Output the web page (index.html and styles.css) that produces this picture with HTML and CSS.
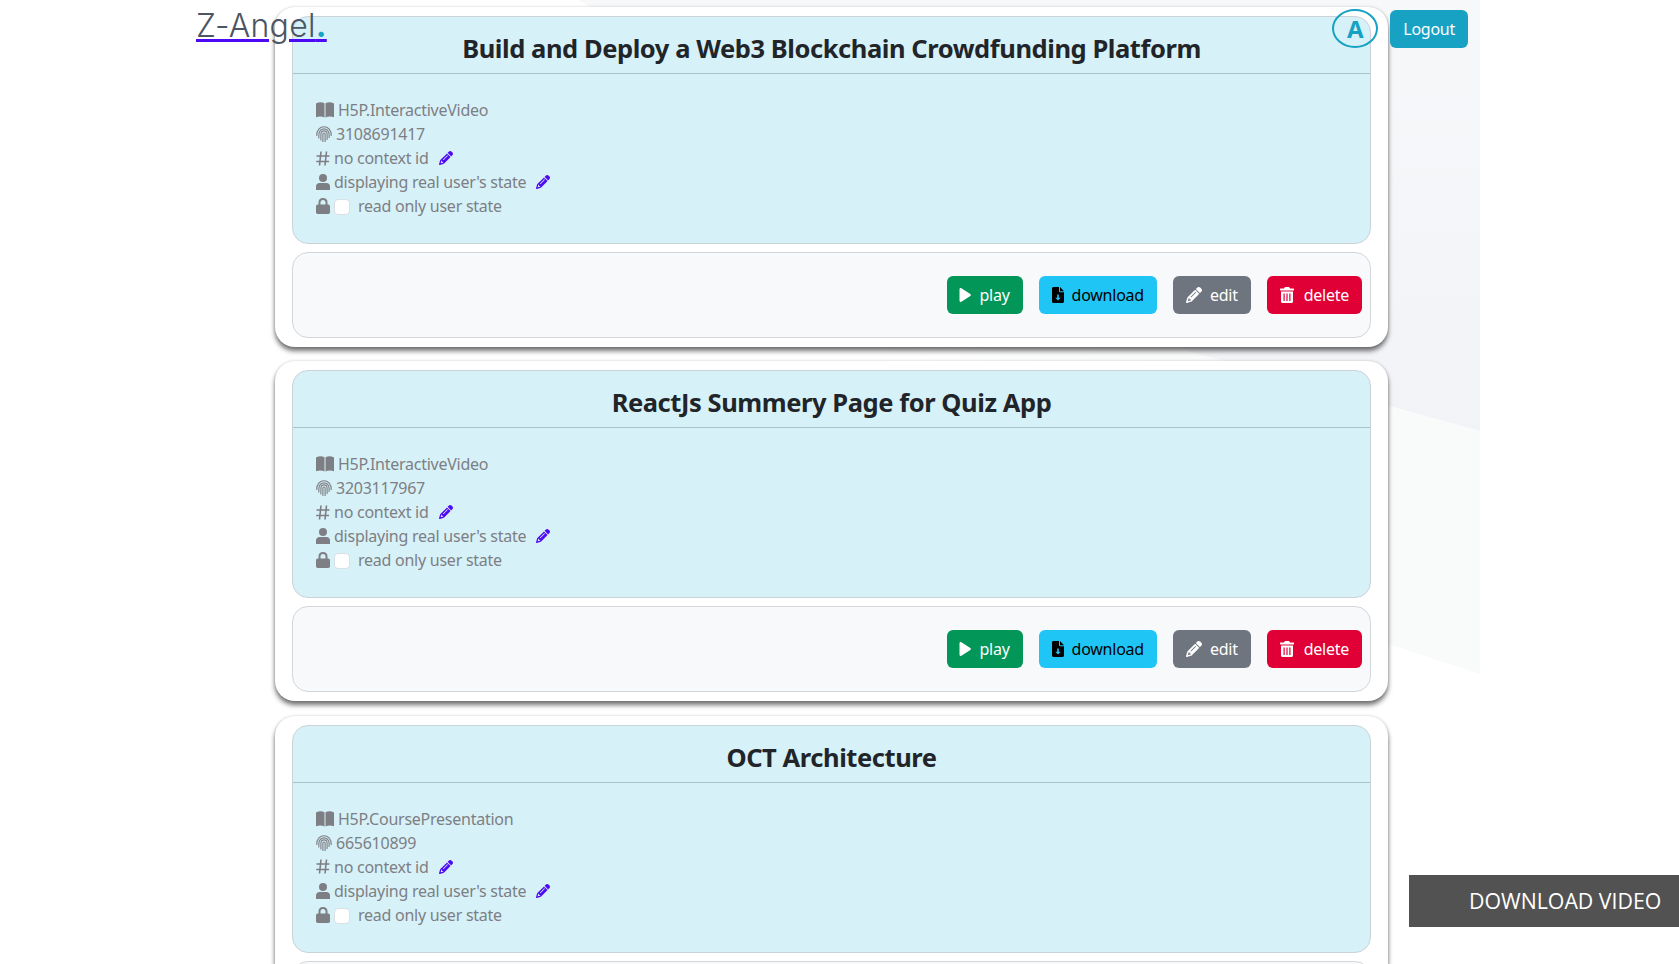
FILE: index.html
```html
<!DOCTYPE html>
<html lang="en">
<head>
<meta charset="utf-8">
<title>Z-Angel</title>
<link rel="stylesheet" href="styles.css">
</head>
<body>
<svg class="bg" width="1480" height="700" viewBox="0 0 1480 700" aria-hidden="true">
  <defs>
    <linearGradient id="bg-grey" x1="0" y1="0" x2="0" y2="1">
      <stop offset="0" stop-color="#f7f8fa"/>
      <stop offset="1" stop-color="#f2f3f6"/>
    </linearGradient>
    <linearGradient id="bg-light" x1="0" y1="0" x2="1" y2="0">
      <stop offset="0" stop-color="#ffffff"/>
      <stop offset="0.45" stop-color="#f9fafa"/>
      <stop offset="1" stop-color="#f9fafa"/>
    </linearGradient>
  </defs>
  <polygon fill="url(#bg-grey)" points="578,0 1480,0 1480,431 1190,352"/>
  <polygon fill="url(#bg-light)" points="880,175 1190,352 1480,431 1480,674 1300,615 880,400"/>
</svg>
<svg width="0" height="0" class="defs" aria-hidden="true">
  <symbol id="i-book" viewBox="0 0 18 16"><path d="M0 1.500C3-.2 6.200 0 8.500 1.300V15.500C6.200 14.300 3 14.100 0 15.200ZM18 1.500C15-.2 11.800 0 9.500 1.300V15.500C11.800 14.300 15 14.100 18 15.200Z"/></symbol>
  <symbol id="i-finger" viewBox="0 0 16 16"><g fill="none" stroke="currentColor" stroke-width="1.150" stroke-linecap="round"><path d="M.8 9.500C.5 3.500 4.500.7 8 .7S15.500 3.500 15.200 9.500"/><path d="M2.800 12C2.900 10.500 2.900 9.300 2.900 8.200 2.900 4.800 5.500 2.800 8 2.800S13.100 4.800 13.100 8.200V11.500"/><path d="M4.900 14V8.200C4.900 6.200 6.500 4.900 8 4.900S11.100 6.200 11.100 8.200V13.500"/><path d="M6.900 15.400V8.200C6.900 7.400 7.400 7 8 7S9.100 7.400 9.100 8.200V15.400"/></g></symbol>
  <symbol id="i-hash" viewBox="0 0 14 15"><g fill="none" stroke="currentColor" stroke-width="1.600"><path d="M5 .5 3.500 14.500M10.500.5 9 14.500M.5 5H13.500M.2 10.500H13"/></g></symbol>
  <symbol id="i-user" viewBox="0 0 14 16"><circle cx="7" cy="4" r="4"/><path d="M3.500 9h7C12.500 9 14 10.500 14 12.500V16H0V12.500C0 10.500 1.500 9 3.500 9Z"/></symbol>
  <symbol id="i-lock" viewBox="0 0 14 16"><path fill="none" stroke="currentColor" stroke-width="2" d="M3.500 7V4.500C3.500 2.500 5 1 7 1s3.500 1.500 3.500 3.500V7"/><rect y="6.500" width="14" height="9.500" rx="1.800"/></symbol>
  <symbol id="i-pencil" viewBox="0 0 512 512"><path d="M410.300 231l11.300-11.300-33.900-33.900-62.100-62.100L291.700 89.800l-11.300 11.300-22.600 22.600L58.600 322.900c-10.400 10.400-18 23.300-22.200 37.400L1 480.700c-2.500 8.400-.2 17.500 6.100 23.700s15.300 8.500 23.700 6.100l120.300-35.400c14.100-4.200 27-11.800 37.400-22.200L387.700 253.700 410.300 231zM160 399.400l-9.100 22.700c-4 3.100-8.500 5.400-13.300 6.900L59.400 452l23-78.100c1.400-4.900 3.800-9.400 6.900-13.300l22.700-9.100v32c0 8.800 7.200 16 16 16h32zM362.700 18.700L348.300 33.200 325.700 55.800 314.300 67.100l33.900 33.900 62.100 62.100 33.900 33.900 11.300-11.300 22.600-22.600 14.500-14.500c25-25 25-65.500 0-90.500L453.300 18.700c-25-25-65.500-25-90.500 0zm-47.400 168l-144 144c-6.200 6.200-16.400 6.200-22.600 0s-6.200-16.400 0-22.600l144-144c6.200-6.200 16.400-6.200 22.600 0s6.200 16.400 0 22.600z"/></symbol>
  <symbol id="i-play" viewBox="0 0 12 14"><path d="M.5 1.300C.5.300 1.500-.2 2.400.3L11.300 6c.8.500.8 1.500 0 2L2.400 13.700C1.500 14.200.5 13.700.5 12.700Z"/></symbol>
  <symbol id="i-file" viewBox="0 0 12 16"><path fill-rule="evenodd" d="M1.500 0H7V4.500C7 5 7.400 5.300 8 5.300H12V14.500C12 15.300 11.300 16 10.500 16H1.500C.7 16 0 15.300 0 14.500V1.500C0 .7.700 0 1.500 0ZM8 0 12 4.200H8ZM5.200 7.500V10.700H3.300L6 13.500 8.700 10.700H6.800V7.500Z"/></symbol>
  <symbol id="i-trash" viewBox="0 0 14 16"><path fill-rule="evenodd" d="M4.500.5C4.700.2 5 0 5.300 0H8.700C9 0 9.300.2 9.500.5L10 1.500H13.500C13.800 1.500 14 1.700 14 2V3C14 3.300 13.800 3.500 13.500 3.500H.5C.2 3.500 0 3.300 0 3V2C0 1.700.2 1.500.5 1.500H4ZM1 4.500H13V14.500C13 15.300 12.300 16 11.500 16H2.500C1.700 16 1 15.300 1 14.500ZM3.500 6.500V14H4.700V6.500ZM6.400 6.500V14H7.600V6.500ZM9.300 6.500V14H10.500V6.500Z"/></symbol>
</svg>

<header class="nav">
  <a class="logo" href="#">Z-Angel<span class="logo-dot">.</span></a>
  <div class="nav-right">
    <span class="avatar">A</span>
    <button class="btn btn-logout">Logout</button>
  </div>
</header>

<main class="list">
  <article class="card">
    <section class="panel">
      <h2 class="title">Build and Deploy a Web3 Blockchain Crowdfunding Platform</h2>
      <ul class="meta">
        <li><svg class="ic ic-book"><use href="#i-book"/></svg>H5P.InteractiveVideo</li>
        <li><svg class="ic ic-finger"><use href="#i-finger"/></svg>3108691417</li>
        <li><svg class="ic ic-hash"><use href="#i-hash"/></svg>no context id<svg class="ic-edit"><use href="#i-pencil"/></svg></li>
        <li><svg class="ic ic-user"><use href="#i-user"/></svg>displaying real user's state<svg class="ic-edit"><use href="#i-pencil"/></svg></li>
        <li><svg class="ic ic-lock"><use href="#i-lock"/></svg><span class="check"></span>read only user state</li>
      </ul>
    </section>
    <footer class="actions">
      <button class="btn btn-play"><svg class="bi bi-play"><use href="#i-play"/></svg>play</button>
      <button class="btn btn-download"><svg class="bi bi-file"><use href="#i-file"/></svg>download</button>
      <button class="btn btn-edit"><svg class="bi bi-pencil"><use href="#i-pencil"/></svg>edit</button>
      <button class="btn btn-delete"><svg class="bi bi-trash"><use href="#i-trash"/></svg>delete</button>
    </footer>
  </article>

  <article class="card">
    <section class="panel">
      <h2 class="title">ReactJs Summery Page for Quiz App</h2>
      <ul class="meta">
        <li><svg class="ic ic-book"><use href="#i-book"/></svg>H5P.InteractiveVideo</li>
        <li><svg class="ic ic-finger"><use href="#i-finger"/></svg>3203117967</li>
        <li><svg class="ic ic-hash"><use href="#i-hash"/></svg>no context id<svg class="ic-edit"><use href="#i-pencil"/></svg></li>
        <li><svg class="ic ic-user"><use href="#i-user"/></svg>displaying real user's state<svg class="ic-edit"><use href="#i-pencil"/></svg></li>
        <li><svg class="ic ic-lock"><use href="#i-lock"/></svg><span class="check"></span>read only user state</li>
      </ul>
    </section>
    <footer class="actions">
      <button class="btn btn-play"><svg class="bi bi-play"><use href="#i-play"/></svg>play</button>
      <button class="btn btn-download"><svg class="bi bi-file"><use href="#i-file"/></svg>download</button>
      <button class="btn btn-edit"><svg class="bi bi-pencil"><use href="#i-pencil"/></svg>edit</button>
      <button class="btn btn-delete"><svg class="bi bi-trash"><use href="#i-trash"/></svg>delete</button>
    </footer>
  </article>

  <article class="card card-cut">
    <section class="panel">
      <h2 class="title">OCT Architecture</h2>
      <ul class="meta">
        <li><svg class="ic ic-book"><use href="#i-book"/></svg>H5P.CoursePresentation</li>
        <li><svg class="ic ic-finger"><use href="#i-finger"/></svg>665610899</li>
        <li><svg class="ic ic-hash"><use href="#i-hash"/></svg>no context id<svg class="ic-edit"><use href="#i-pencil"/></svg></li>
        <li><svg class="ic ic-user"><use href="#i-user"/></svg>displaying real user's state<svg class="ic-edit"><use href="#i-pencil"/></svg></li>
        <li><svg class="ic ic-lock"><use href="#i-lock"/></svg><span class="check"></span>read only user state</li>
      </ul>
    </section>
    <footer class="actions"></footer>
  </article>
</main>

<a class="dl-video" href="#">DOWNLOAD VIDEO</a>
</body>
</html>
```
FILE: styles.css
```css
* { box-sizing: border-box; }
html, body { height: 964px; }
body {
  margin: 0;
  background: #fff;
  font-family: "Noto Sans", "Open Sans", sans-serif;
  font-size: 16px;
  letter-spacing: -0.25px;
  color: #212529;
}
.defs { position: absolute; }
.bg { position: absolute; left: 0; top: 0; z-index: -1; }

.nav {
  position: absolute;
  left: 196px;
  top: 0;
  width: 1272px;
  height: 58px;
  display: flex;
  justify-content: space-between;
  z-index: 5;
}
.logo {
  font-family: Inter, "Open Sans", sans-serif;
  font-weight: 300;
  font-size: 32px;
  letter-spacing: 0.3px;
  line-height: 52px;
  color: #4b5563;
  text-decoration: underline;
  text-decoration-color: #4f0af5;
  text-decoration-thickness: 3px;
  text-underline-offset: 2px;
}
.logo-dot { color: #17a2c8; font-weight: 700; }
.nav-right { display: flex; align-items: flex-start; gap: 12px; padding-top: 10px; }
.avatar {
  width: 46px;
  height: 39px;
  border: 2px solid #17a2c4;
  border-radius: 50%;
  margin-top: -1px;
  display: flex;
  align-items: center;
  justify-content: center;
  color: #17a2c4;
  font-weight: 700;
  font-size: 24px;
}

.list { width: 1113px; margin-left: 275px; padding-top: 7px; display: flex; flex-direction: column; gap: 14.25px; }
.card {
  background: #fff;
  border-radius: 20px;
  padding: 9px 17px;
  height: 340px;
  box-shadow: 0 4px 5px rgba(0,0,0,.55), 0 0 3px rgba(0,0,0,.16);
  flex: none;
}
.card-cut { height: 248.5px; overflow: hidden; border-radius: 20px 20px 0 0; }
.panel {
  height: 228px;
  background: #d7f1f8;
  border: 1px solid #ccd3d8;
  border-radius: 16px;
  overflow: hidden;
}
.title {
  margin: 0;
  height: 57px;
  padding-top: 5px;
  text-align: center;
  font-size: 25.5px;
  letter-spacing: -0.43px;
  line-height: 52px;
  font-weight: 700;
  border-bottom: 1px solid #a9c3cc;
}
.meta {
  list-style: none;
  margin: 0;
  padding: 24px 0 0 23px;
  color: #7d7f84;
  font-size: 16px;
  line-height: 24px;
}
.meta li { display: flex; align-items: center; height: 24px; }
.ic { fill: currentColor; color: #7d7f84; flex: none; margin-right: 4px; }
.ic-book { width: 18px; height: 16px; }
.ic-finger { width: 16px; height: 16px; }
.ic-hash { width: 14px; height: 15px; }
.ic-user { width: 14px; height: 16px; }
.ic-lock { width: 14px; height: 16px; }
.ic-edit { width: 14px; height: 14px; margin-left: 10px; fill: #4f0af5; }
.check {
  width: 16px;
  height: 16px;
  background: #fff;
  border: 1px solid #d9e0e3;
  border-radius: 4px;
  margin-right: 8px;
  margin-top: 2px;
}
.actions {
  margin-top: 8px;
  height: 86px;
  background: #f8f9fa;
  border: 1px solid #d4d6d9;
  border-radius: 16px;
  display: flex;
  align-items: center;
  justify-content: flex-end;
  gap: 16px;
  padding-right: 8px;
}
.btn {
  height: 38px;
  border: 0;
  border-radius: 6px;
  padding: 0 13px;
  display: inline-flex;
  align-items: center;
  font: inherit;
  letter-spacing: inherit;
  color: #fff;
}
.bi { fill: currentColor; margin-right: 8px; }
.bi-play { width: 12px; height: 14px; }
.bi-file { width: 12px; height: 16px; }
.bi-pencil { width: 16px; height: 16px; }
.bi-trash { width: 14px; height: 16px; margin-right: 10px; }
.btn-logout { background: #17a2c4; }
.btn-play { background: #029658; padding-left: 12px; }
.btn-download { background: #1fc6f5; color: #000; }
.btn-edit { background: #6f757e; }
.btn-delete { background: #e10035; }

.dl-video {
  position: fixed;
  right: 0;
  top: 875px;
  width: 270px;
  height: 52px;
  background: #525252;
  color: #fff;
  font-family: "Open Sans", sans-serif;
  font-size: 21.3px;
  letter-spacing: 0;
  line-height: 52px;
  text-decoration: none;
  padding-left: 60px;
}
```
